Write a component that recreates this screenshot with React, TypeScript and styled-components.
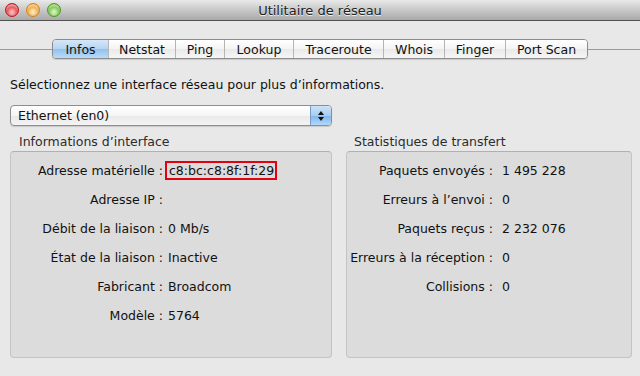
import React from 'react'
import styled, { createGlobalStyle } from 'styled-components'

const GlobalStyle = createGlobalStyle`
  html, body {
    margin: 0;
    padding: 0;
    background: #e8e8e8;
  }
  body {
    font-family: 'DejaVu Sans', 'Liberation Sans', sans-serif;
    font-size: 12px;
    color: #111;
  }
`

const Window = styled.div`
  width: 640px;
  height: 376px;
  display: flex;
  flex-direction: column;
  background: #e8e8e8;
  overflow: hidden;
`

const TitleBar = styled.div`
  height: 20px;
  display: grid;
  grid-template-columns: 1fr auto 1fr;
  align-items: center;
  background: linear-gradient(#e9e9e9, #c8c8c8 50%, #a9a9a9);
  border-bottom: 1px solid #515151;
`

const Lights = styled.div`
  display: flex;
  gap: 7px;
  padding-left: 5px;
`

const Light = styled.span<{ $c: string; $d: string }>`
  width: 14px;
  height: 14px;
  border-radius: 50%;
  box-sizing: border-box;
  border: 1px solid ${(p) => p.$d};
  background: radial-gradient(circle at 50% 75%, #fff8 0, transparent 55%),
    radial-gradient(circle at 50% 60%, ${(p) => p.$c} 0, ${(p) => p.$d} 90%);
  box-shadow: inset 0 2px 2px #fff9;
`

const Title = styled.div`
  font-size: 13px;
  color: #222;
  text-shadow: 0 1px 0 #eee;
`

const TabRow = styled.div`
  display: flex;
  align-items: center;
  margin-top: 18px;
`

const TabLine = styled.div`
  flex: 1;
  height: 1px;
  background: #9a9a9a;
`

const Tabs = styled.div`
  display: flex;
  height: 20px;
  box-sizing: border-box;
  border: 1px solid #8c8c8c;
  border-radius: 4px;
  overflow: hidden;
  box-shadow: 0 1px 1px #0002;
`

const Tab = styled.div<{ $w: number; $on?: boolean }>`
  width: ${(p) => p.$w}px;
  box-sizing: border-box;
  display: flex;
  align-items: center;
  justify-content: center;
  font-size: 12.5px;
  color: #111;
  background: ${(p) =>
    p.$on
      ? 'linear-gradient(#d5e7f8, #b4d4f2 50%, #92c1ee 51%, #b9dbf8)'
      : 'linear-gradient(#ffffff, #f4f4f4 50%, #e9e9e9 51%, #f6f6f6)'};
  & + & {
    border-left: 1px solid #b5b5b5;
  }
`

const Content = styled.div`
  padding: 18px 8px 0 10px;
  display: flex;
  flex-direction: column;
`

const Prompt = styled.div`
  font-size: 12.5px;
  line-height: 16px;
`

const Select = styled.div`
  margin-top: 12px;
  width: 322px;
  height: 21px;
  box-sizing: border-box;
  border: 1px solid #8e8e8e;
  border-radius: 4px;
  display: flex;
  overflow: hidden;
  background: linear-gradient(#ffffff, #f5f5f5 50%, #e9e9e9 51%, #f4f4f4);
  box-shadow: 0 1px 1px #0002;
`

const SelectLabel = styled.div`
  flex: 1;
  padding-left: 7px;
  display: flex;
  align-items: center;
  font-size: 12.5px;
`

const Stepper = styled.div`
  width: 20px;
  border-left: 1px solid #7a9cc4;
  background: linear-gradient(#cde2f7, #a9cdf1 50%, #7fb5ea 51%, #b3d8fa);
  display: flex;
  align-items: center;
  justify-content: center;
`

const Columns = styled.div`
  display: grid;
  grid-template-columns: 322px 286px;
  gap: 14px;
  margin-top: 8px;
`

const Group = styled.div`
  display: flex;
  flex-direction: column;
`

const GroupTitle = styled.div<{ $indent: number }>`
  padding-left: ${(p) => p.$indent}px;
  font-size: 12.5px;
  line-height: 16px;
  color: #2c2c2c;
`

const Panel = styled.div<{ $label: number }>`
  margin-top: 1px;
  height: 207px;
  box-sizing: border-box;
  border: 1px solid #c4c4c4;
  border-top-color: #b0b0b0;
  border-radius: 4px;
  background: #dcdcdc;
  padding-top: 4px;
  display: grid;
  grid-template-columns: ${(p) => p.$label}px 1fr;
  grid-auto-rows: 29px;
  align-content: start;
  align-items: center;
`

const Label = styled.div`
  text-align: right;
  white-space: nowrap;
  font-size: 12.5px;
`

const Value = styled.div<{ $gap: number }>`
  padding-left: ${(p) => p.$gap}px;
  font-size: 12.5px;
  white-space: nowrap;
`

const Marked = styled.span`
  display: inline-block;
  margin-left: -3px;
  padding: 1px 1px 0 2px;
  border: 2px solid #e4000f;
  line-height: 14px;
`

const tabs: [string, number][] = [
  ['Infos', 55],
  ['Netstat', 67],
  ['Ping', 49],
  ['Lookup', 69],
  ['Traceroute', 90],
  ['Whois', 61],
  ['Finger', 61],
  ['Port Scan', 82],
]

const iface: [string, React.ReactNode][] = [
  ['Adresse matérielle :', <Marked>c8:bc:c8:8f:1f:29</Marked>],
  ['Adresse IP :', ''],
  ['Débit de la liaison :', '0 Mb/s'],
  ['État de la liaison :', 'Inactive'],
  ['Fabricant :', 'Broadcom'],
  ['Modèle :', '5764'],
]

const stats: [string, string][] = [
  ['Paquets envoyés :', '1 495 228'],
  ['Erreurs à l’envoi :', '0'],
  ['Paquets reçus :', '2 232 076'],
  ['Erreurs à la réception :', '0'],
  ['Collisions :', '0'],
]

const App: React.FC = () => (
  <Window>
    <GlobalStyle />
    <TitleBar>
      <Lights>
        <Light $c="#ff8a8a" $d="#c5141b" />
        <Light $c="#ffd98a" $d="#d9820e" />
        <Light $c="#b8f08a" $d="#4a9a1c" />
      </Lights>
      <Title>Utilitaire de réseau</Title>
      <div />
    </TitleBar>

    <TabRow>
      <TabLine />
      <Tabs>
        {tabs.map(([name, w], i) => (
          <Tab key={name} $w={w} $on={i === 0}>
            {name}
          </Tab>
        ))}
      </Tabs>
      <TabLine />
    </TabRow>

    <Content>
      <Prompt>Sélectionnez une interface réseau pour plus d’informations.</Prompt>
      <Select>
        <SelectLabel>Ethernet (en0)</SelectLabel>
        <Stepper>
          <svg width="8" height="12" viewBox="0 0 8 12">
            <path d="M4 1 L7 5 L1 5 Z" fill="#111" />
            <path d="M4 11 L7 7 L1 7 Z" fill="#111" />
          </svg>
        </Stepper>
      </Select>

      <Columns>
        <Group>
          <GroupTitle $indent={9}>Informations d’interface</GroupTitle>
          <Panel $label={152}>
            {iface.map(([k, v]) => (
              <React.Fragment key={k}>
                <Label>{k}</Label>
                <Value $gap={5}>{v}</Value>
              </React.Fragment>
            ))}
          </Panel>
        </Group>
        <Group>
          <GroupTitle $indent={8}>Statistiques de transfert</GroupTitle>
          <Panel $label={146}>
            {stats.map(([k, v]) => (
              <React.Fragment key={k}>
                <Label>{k}</Label>
                <Value $gap={9}>{v}</Value>
              </React.Fragment>
            ))}
          </Panel>
        </Group>
      </Columns>
    </Content>
  </Window>
)

export default App
